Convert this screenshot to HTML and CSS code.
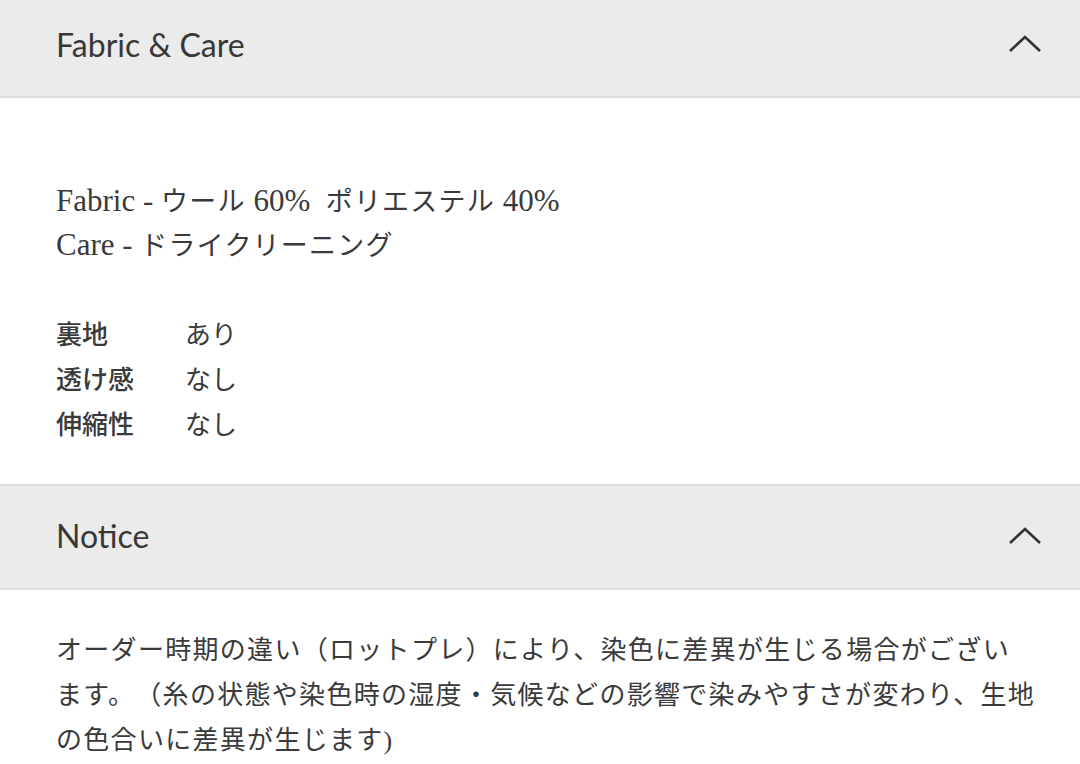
FILE: index.html
```html
<!DOCTYPE html>
<html lang="ja">
<head>
<meta charset="utf-8">
<link rel="stylesheet" href="styles.css">
</head>
<body>
<section class="acc">
  <div class="acc-head">
    <span class="acc-title">Fabric &amp; Care</span>
    <svg class="chev" width="34" height="20" viewBox="0 0 34 20"><path d="M2 18 L17 4 L32 18" fill="none" stroke="#333" stroke-width="2.6"/></svg>
  </div>
  <div class="acc-body fabric">
    <p class="lines">Fabric - <span class="ja">ウール</span> 60%&nbsp;&nbsp;<span class="ja">ポリエステル</span> 40%<br>Care - <span class="ja">ドライクリーニング</span></p>
    <div class="spec">
      <span class="k">裏地</span><span class="v">あり</span>
      <span class="k">透け感</span><span class="v">なし</span>
      <span class="k">伸縮性</span><span class="v">なし</span>
    </div>
  </div>
</section>
<section class="acc">
  <div class="acc-head notice-head">
    <span class="acc-title">Notice</span>
    <svg class="chev" width="34" height="20" viewBox="0 0 34 20"><path d="M2 18 L17 4 L32 18" fill="none" stroke="#333" stroke-width="2.6"/></svg>
  </div>
  <div class="acc-body notice">
    <p class="ntext">オーダー時期の違い（ロットプレ）により、染色に差異が生じる場合がござい<br>ます。（糸の状態や染色時の湿度・気候などの影響で染みやすさが変わり、生地<br>の色合いに差異が生じます)</p>
  </div>
</section>
</body>
</html>
```
FILE: styles.css
```css
html, body { margin: 0; padding: 0; background: #fff; }
body { width: 1080px; height: 764px; overflow: hidden; color: #333; }
.acc-head {
  height: 96px;
  background: #ebebeb;
  border-bottom: 2px solid #dcdcdc;
  display: flex;
  align-items: center;
  justify-content: space-between;
  padding: 0 38px 0 56px;
  box-sizing: content-box;
}
.notice-head { border-top: 2px solid #dcdcdc; height: 102px; }
.acc-title {
  font-family: "Lato", "Noto Sans", sans-serif;
  font-size: 32px;
  color: #383838;
  margin-top: -8px;
}
.notice-head .acc-title { margin-top: -4px; }
.chev { margin-top: -10px; }
.notice-head .chev { margin-top: -4px; }
.acc-body { padding: 0 56px; }
.fabric { padding-top: 80px; padding-bottom: 39px; }
.lines {
  margin: 0;
  font-family: "Liberation Serif", "Noto Sans CJK JP", serif;
  font-size: 31px;
  line-height: 43px;
  color: #3a3a3a;
}
.lines .ja { font-family: "Noto Sans CJK JP", sans-serif; font-size: 27px; letter-spacing: 1.2px; }
.spec {
  margin-top: 44px;
  display: grid;
  grid-template-columns: 129px auto;
  justify-content: start;
  font-family: "Noto Sans CJK JP", serif;
  font-size: 26px;
  line-height: 45px;
  color: #3a3a3a;
}
.spec .k { font-weight: 500; }
.notice { padding-top: 38px; }
.ntext {
  margin: 0;
  font-family: "Liberation Serif", "Noto Sans CJK JP", serif;
  font-size: 26px;
  line-height: 45px;
  letter-spacing: 1.3px;
  text-spacing-trim: space-all;
  font-feature-settings: "halt" 0;
  color: #3a3a3a;
  white-space: nowrap;
}
```
